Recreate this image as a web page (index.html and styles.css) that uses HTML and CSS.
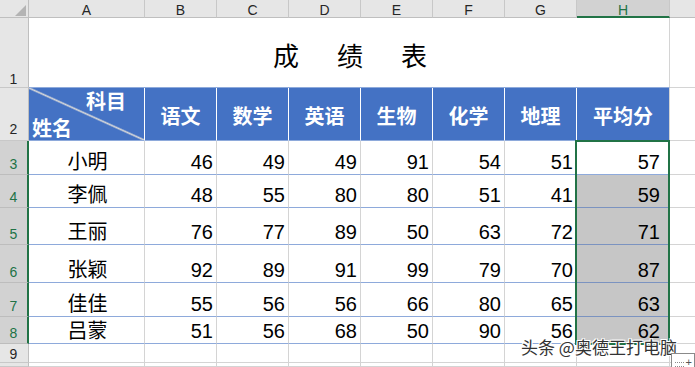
FILE: index.html
```html
<!DOCTYPE html>
<html lang="zh-CN">
<head>
<meta charset="utf-8">
<title>成绩表</title>
<link rel="stylesheet" href="styles.css">
</head>
<body>
<div class="sheet">
  <div class="corner"><span class="tri"></span></div>
  <div class="ch">A</div>
  <div class="ch">B</div>
  <div class="ch">C</div>
  <div class="ch">D</div>
  <div class="ch">E</div>
  <div class="ch">F</div>
  <div class="ch">G</div>
  <div class="ch sel">H</div>
  <div class="ch ext"></div>

  <div class="rh low">1</div>
  <div class="title"><span>成</span><span>绩</span><span>表</span></div>
  <div class="c ext"></div>

  <div class="rh">2</div>
  <div class="hd diag"><span class="d-top">科目</span><span class="d-bot">姓名</span></div>
  <div class="hd">语文</div>
  <div class="hd">数学</div>
  <div class="hd">英语</div>
  <div class="hd">生物</div>
  <div class="hd">化学</div>
  <div class="hd">地理</div>
  <div class="hd last">平均分</div>
  <div class="c ext"></div>

  <div class="rh on">3</div>
  <div class="c d name">小明</div>
  <div class="c d num">46</div><div class="c d num">49</div><div class="c d num">49</div><div class="c d num">91</div><div class="c d num">54</div><div class="c d num">51</div>
  <div class="c d num avg">57</div>
  <div class="c ext"></div>

  <div class="rh on">4</div>
  <div class="c d name">李佩</div>
  <div class="c d num">48</div><div class="c d num">55</div><div class="c d num">80</div><div class="c d num">80</div><div class="c d num">51</div><div class="c d num">41</div>
  <div class="c d num avg fill">59</div>
  <div class="c ext"></div>

  <div class="rh on">5</div>
  <div class="c d name">王丽</div>
  <div class="c d num">76</div><div class="c d num">77</div><div class="c d num">89</div><div class="c d num">50</div><div class="c d num">63</div><div class="c d num">72</div>
  <div class="c d num avg fill">71</div>
  <div class="c ext"></div>

  <div class="rh on">6</div>
  <div class="c d name">张颖</div>
  <div class="c d num">92</div><div class="c d num">89</div><div class="c d num">91</div><div class="c d num">99</div><div class="c d num">79</div><div class="c d num">70</div>
  <div class="c d num avg fill">87</div>
  <div class="c ext"></div>

  <div class="rh on">7</div>
  <div class="c d name">佳佳</div>
  <div class="c d num">55</div><div class="c d num">56</div><div class="c d num">56</div><div class="c d num">66</div><div class="c d num">80</div><div class="c d num">65</div>
  <div class="c d num avg fill">63</div>
  <div class="c ext"></div>

  <div class="rh on">8</div>
  <div class="c d name">吕蒙</div>
  <div class="c d num">51</div><div class="c d num">56</div><div class="c d num">68</div><div class="c d num">50</div><div class="c d num">90</div><div class="c d num">56</div>
  <div class="c d num avg fill">62</div>
  <div class="c ext"></div>

  <div class="rh low">9</div>
  <div class="c"></div><div class="c"></div><div class="c"></div><div class="c"></div><div class="c"></div><div class="c"></div><div class="c"></div><div class="c"></div>
  <div class="c ext"></div>

  <div class="rh"></div>
  <div class="c"></div><div class="c"></div><div class="c"></div><div class="c"></div><div class="c"></div><div class="c"></div><div class="c"></div><div class="c"></div>
  <div class="c ext"></div>

  <div class="selbox"></div>
  <div class="mark">头条 @奥德王打电脑</div>
  <div class="qa"><span class="qa-dots"></span><span class="qa-plus">+</span></div>
</div>
</body>
</html>
```

FILE: styles.css
```css
* { box-sizing: border-box; }

html, body {
  margin: 0;
  padding: 0;
  background: #ffffff;
}

body {
  font-family: "Liberation Sans", "Noto Sans CJK SC", sans-serif;
  color: #000;
}

.sheet {
  position: relative;
  width: 695px;
  height: 367px;
  overflow: hidden;
  display: grid;
  grid-template-columns: 29px 116px repeat(6, 72px) 93px 1fr;
  grid-template-rows: 18px 70px 53px 34px 33px 37px 38px 34px 27px 19px 1fr;
  background: #fff;
}

/* column headers */
.corner {
  background: #e6e6e6;
  border-right: 1px solid #bfbfbf;
  border-bottom: 1px solid #bfbfbf;
  display: flex;
  justify-content: flex-end;
  align-items: flex-end;
  padding: 0 2px 1px 0;
}

.tri {
  width: 11px;
  height: 11px;
  background: #b4b4b4;
  clip-path: polygon(100% 0, 100% 100%, 0 100%);
}

.ch {
  background: #e6e6e6;
  border-right: 1px solid #c8c8c8;
  border-bottom: 1px solid #bfbfbf;
  font-size: 14px;
  line-height: 17px;
  padding-top: 2px;
  text-align: center;
  color: #262626;
}

.ch.sel {
  background: #d2d2d2;
  color: #217346;
  border-bottom: 2px solid #217346;
  padding-top: 2px;
}

.ch.ext { border-right: none; }

/* row headers */
.rh {
  background: #e6e6e6;
  border-right: 1px solid #bfbfbf;
  border-bottom: 1px solid #c8c8c8;
  font-size: 14px;
  line-height: 16px;
  display: flex;
  justify-content: center;
  align-items: flex-end;
  padding-bottom: 3px;
  padding-right: 1px;
  color: #262626;
}

.rh.low { padding-bottom: 0; }

.rh.on {
  background: #d2d2d2;
  color: #217346;
  border-right: 2px solid #217346;
  border-bottom-color: #bdbdbd;
  padding-bottom: 2px;
  padding-right: 0;
}

/* cells */
.c {
  border-right: 1px solid #d4d4d4;
  border-bottom: 1px solid #d4d4d4;
}

.c.ext { border-right: none; }

.title {
  grid-column: span 8;
  border-bottom: 1px solid #8eaadb;
  border-right: 1px solid #d4d4d4;
  display: flex;
  justify-content: center;
  align-items: center;
  gap: 38px;
  font-family: "Noto Sans CJK SC", sans-serif;
  font-size: 26px;
  padding-top: 4px;
  padding-left: 2px;
}

.hd {
  background: #4472c4;
  color: #fff;
  font-family: "Noto Sans CJK SC", sans-serif;
  font-weight: 700;
  font-size: 20px;
  border-right: 1px solid #fff;
  border-bottom: 1px solid #8eaadb;
  display: flex;
  justify-content: center;
  align-items: center;
  padding-top: 2px;
}

.hd.last { border-right: 1px solid #d4d4d4; }

.hd.diag {
  flex-direction: column;
  align-items: stretch;
  justify-content: space-between;
  padding: 1px 4px 0 3px;
  line-height: 24px;
  background:
    linear-gradient(to top right, transparent calc(50% - 1.6px), #d9d9d9 50%, transparent calc(50% + 1.6px)),
    #4472c4;
}

.d-top { align-self: flex-end; padding-right: 14px; }
.d-bot { align-self: flex-start; }

.c.d {
  border-bottom: 1px solid #8eaadb;
  display: flex;
  align-items: flex-end;
}

.name {
  justify-content: center;
  font-family: "Noto Sans CJK SC", sans-serif;
  font-size: 20px;
  line-height: 24px;
  padding-bottom: 1px;
  padding-left: 2px;
}

.num {
  justify-content: flex-end;
  font-size: 20px;
  line-height: 22px;
  padding-right: 3px;
  padding-bottom: 1px;
}

.num.avg { padding-right: 9px; }

.num.fill {
  background: #c6c6c6;
  border-bottom-color: #7b93c0;
}

/* selection outline over H3:H8 */
.selbox {
  position: absolute;
  grid-column: 9 / 10;
  grid-row: 4 / 10;
  top: -1px;
  bottom: -1px;
  left: -2px;
  right: 0;
  border: 2px solid #217346;
  pointer-events: none;
}

/* watermark */
.mark {
  position: absolute;
  left: 521px;
  top: 335px;
  font-family: "Noto Sans CJK SC", sans-serif;
  font-size: 17px;
  line-height: 24px;
  color: #333;
  white-space: nowrap;
  text-shadow: 0 0 1px #fff, 1px 1px 0 #fff, -1px -1px 0 #fff, 1px -1px 0 #fff, -1px 1px 0 #fff;
}

/* quick analysis button */
.qa {
  position: absolute;
  left: 671px;
  top: 353px;
  width: 24px;
  height: 18px;
  background: #fff;
  border: 1px solid #8a8a8a;
  display: flex;
  align-items: flex-end;
  justify-content: space-between;
  padding: 0 2px 3px 3px;
}

.qa-dots {
  width: 9px;
  height: 5px;
  border-top: 1px dotted #8a8a8a;
  border-bottom: 1px dotted #8a8a8a;
}

.qa-plus {
  font-size: 11px;
  line-height: 9px;
  color: #555;
}
```
